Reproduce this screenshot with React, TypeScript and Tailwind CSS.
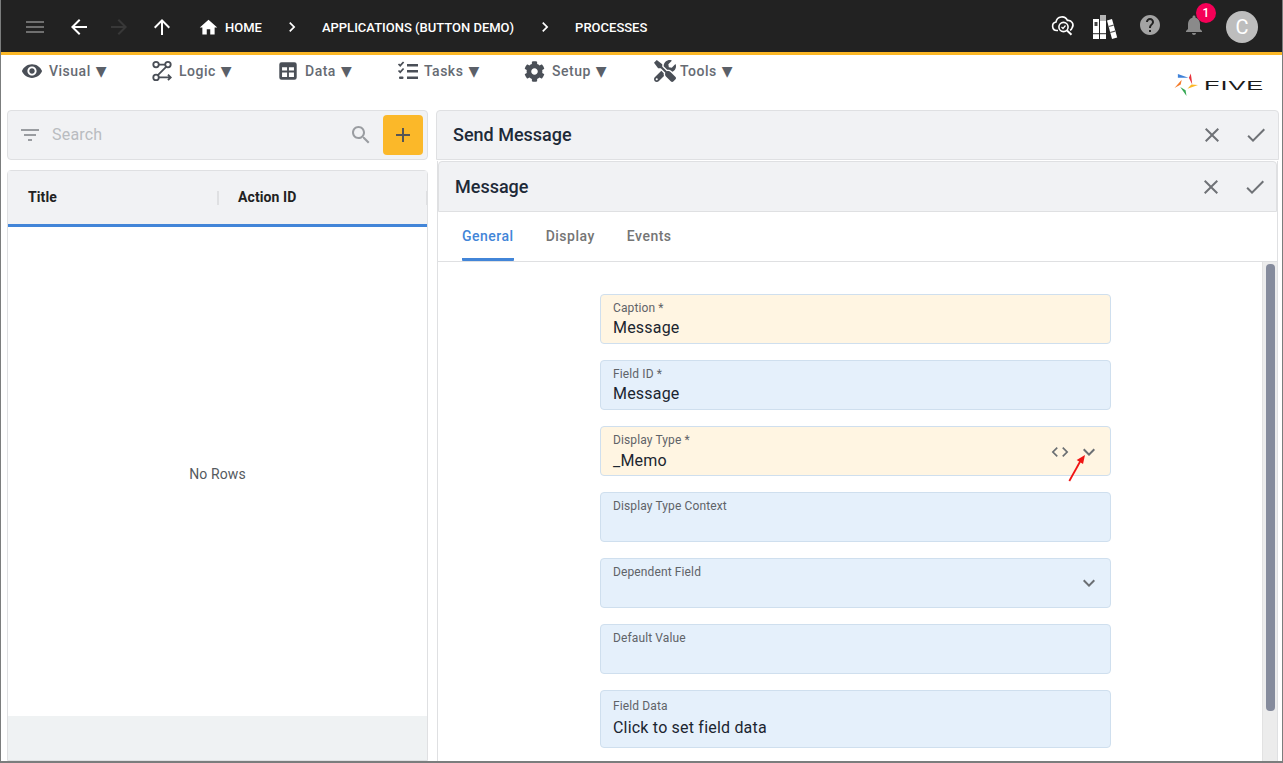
import React from "react";
import { FaCog, FaTools } from "react-icons/fa";

const P = {
  menu: "M3 18h18v-2H3v2zm0-5h18v-2H3v2zm0-7v2h18V6H3z",
  back: "M20 11H7.83l5.59-5.59L12 4l-8 8 8 8 1.41-1.41L7.83 13H20v-2z",
  forward: "M12 4l-1.41 1.41L16.17 11H4v2h12.17l-5.58 5.59L12 20l8-8z",
  up: "M4 12l1.41 1.41L11 7.83V20h2V7.83l5.58 5.59L20 12l-8-8-8 8z",
  home: "M10 20v-6h4v6h5v-8h3L12 3 2 12h3v8z",
  chevron: "M10 6L8.59 7.41 13.17 12l-4.58 4.59L10 18l6-6z",
  eye: "M12 4.5C7 4.5 2.73 7.61 1 12c1.73 4.39 6 7.5 11 7.5s9.27-3.11 11-7.5c-1.73-4.39-6-7.5-11-7.5zM12 17c-2.76 0-5-2.24-5-5s2.24-5 5-5 5 2.24 5 5-2.24 5-5 5zm0-8c-1.66 0-3 1.34-3 3s1.34 3 3 3 3-1.34 3-3-1.34-3-3-3z",
  table: "M5 2.5h14A2.5 2.5 0 0 1 21.5 5v14a2.5 2.5 0 0 1-2.5 2.5H5A2.5 2.5 0 0 1 2.5 19V5A2.5 2.5 0 0 1 5 2.5zM5.5 8v3.5H11V8H5.5zm7.5 0v3.5h5.500V8H13zm-7.500 5.500V18.500H11V13.500H5.500zm7.500 0V18.500h5.500V13.500H13z",
  help: "M12 2C6.48 2 2 6.48 2 12s4.48 10 10 10 10-4.48 10-10S17.52 2 12 2zm1 17h-2v-2h2v2zm2.07-7.75l-.9.92C13.45 12.9 13 13.5 13 15h-2v-.5c0-1.1.45-2.1 1.17-2.83l1.24-1.26c.37-.36.59-.86.59-1.41 0-1.1-.9-2-2-2s-2 .9-2 2H8c0-2.21 1.79-4 4-4s4 1.79 4 4c0 .88-.36 1.68-.93 2.25z",
  bell: "M12 22c1.1 0 2-.9 2-2h-4c0 1.1.89 2 2 2zm6-6v-5c0-3.07-1.64-5.64-4.5-6.32V4c0-.83-.67-1.5-1.5-1.5s-1.5.67-1.5 1.5v.68C7.63 5.36 6 7.92 6 11v5l-2 2v1h16v-1l-2-2z",
  close: "M19 6.41L17.59 5 12 10.59 6.41 5 5 6.41 10.59 12 5 17.59 6.41 19 12 13.41 17.59 19 19 17.59 13.41 12z",
  check: "M9 16.17L4.83 12l-1.41 1.41L9 19 21 7l-1.41-1.41z",
  filter: "M10 18h4v-2h-4v2zM3 6v2h18V6H3zm3 7h12v-2H6v2z",
  search: "M15.5 14h-.79l-.28-.27C15.41 12.59 16 11.11 16 9.5 16 5.91 13.09 3 9.5 3S3 5.91 3 9.5 5.91 16 9.5 16c1.61 0 3.09-.59 4.23-1.57l.27.28v.79l5 4.99L20.49 19l-4.99-5zm-6 0C7.01 14 5 11.99 5 9.5S7.01 5 9.5 5 14 7.01 14 9.5 11.99 14 9.5 14z",
  add: "M19 13h-6v6h-2v-6H5v-2h6V5h2v6h6v2z",
  expand: "M16.59 8.59L12 13.17 7.41 8.59 6 10l6 6 6-6z",
  code: "M9.4 16.6L4.8 12l4.6-4.6L8 6l-6 6 6 6 1.4-1.4zm5.2 0l4.6-4.6-4.6-4.6L16 6l6 6-6 6-1.4-1.4z",
};

function I({ d, size = 24, className = "" }: { d: string; size?: number; className?: string }) {
  return (
    <svg viewBox="0 0 24 24" width={size} height={size} className={`shrink-0 ${className}`} fill="currentColor" fillRule="evenodd">
      <path d={d} />
    </svg>
  );
}

function LogicIcon() {
  return (
    <svg viewBox="0 0 24 24" width={22} height={22} className="shrink-0" fill="none" stroke="currentColor" strokeWidth="2">
      <circle cx="5.5" cy="5" r="3" />
      <circle cx="18.5" cy="5" r="3" />
      <circle cx="5.5" cy="19" r="3" />
      <path d="M8.5 5h7M16.5 7.5L7.5 16.5M8.5 19h13M18.5 16l3 3-3 3" />
    </svg>
  );
}

function TasksIcon() {
  return (
    <svg viewBox="0 0 24 24" width={24} height={24} className="shrink-0" fill="currentColor">
      <path d="M11 5h11v2.4H11zM11 11h11v2.4H11zM11 17.5h11v2.4H11z" />
      <path d="M2.5 5l1.7 1.7L7.6 3" fill="none" stroke="currentColor" strokeWidth="1.7" />
      <path d="M2.5 11.5l1.7 1.7 3.4-3.7" fill="none" stroke="currentColor" strokeWidth="1.7" />
      <rect x="3" y="17.5" width="4.5" height="2.4" rx="1" />
    </svg>
  );
}

function MenuItem({ icon, label, w, gap = "gap-[6px]" }: { icon: React.ReactNode; label: string; w: string; gap?: string }) {
  return (
    <div className={`flex items-center h-[24px] ${gap} ${w} text-[#4a4f57]`}>
      {icon}
      <span className="text-[14px] font-medium tracking-[0.5px] text-[#666b73]">
        {label} <span className="ml-[1px] font-['DejaVu_Sans',sans-serif] text-[14px] text-[#5b6068]">▼</span>
      </span>
    </div>
  );
}

function CloudIcon() {
  return (
    <svg viewBox="0 0 24 24" width={24} height={24} className="shrink-0 mb-[4px]" fill="none" stroke="white" strokeWidth="1.6">
      <path d="M7 17.5H5.8A4.3 4.3 0 0 1 5 9a6 6 0 0 1 11.4-1.6A4.8 4.8 0 0 1 21 15a3 3 0 0 1-2 2.2" />
      <circle cx="12.5" cy="14" r="4.6" />
      <path d="M16 17.5l4.5 4.3" strokeWidth="2" />
      <path d="M10.5 14l1.5 1.5 2.5-3" strokeWidth="1.2" />
    </svg>
  );
}

function BooksIcon() {
  return (
    <svg viewBox="0 0 26 26" width={26} height={26} className="shrink-0" fill="white">
      <path d="M1 5h6v20H1z" />
      <path d="M2.5 8h3v4h-3z" fill="#444" />
      <path d="M8 1h6v24H8z" />
      <path d="M8 1h6v6H8z" fill="#b5b5b5" />
      <path d="M15 6.5l5-1.5 5.2 18.5-5.2 1.5z" />
      <path d="M1 19h6v1.2H1zM8 19h6v1.2H8zM18 18l5-1.4.3 1.1-5 1.4zM16.5 12l5-1.4.3 1.1-5 1.4z" fill="#555" />
    </svg>
  );
}

function FiveLogo() {
  return (
    <div className="flex items-center gap-[5px]">
      <svg viewBox="0 0 26 26" width={25} height={25} className="shrink-0">
        <polygon points="4,1 15,5 4,5" fill="#3f82d9" />
        <polygon points="17.5,0.5 19,12 15.5,5" fill="#e8323c" />
        <polygon points="25,12.5 14,16.5 18,12" fill="#fbb726" />
        <polygon points="13,24 6.5,14.5 12,18" fill="#37a854" />
        <polygon points="0.5,15.5 8,7 7,12" fill="#f47b2a" />
      </svg>
      <span className="w-[58px] inline-block origin-left scale-x-[1.95] font-['Liberation_Sans',sans-serif] text-[13px] leading-[14px] tracking-[0.5px] text-[#1b1b1b]">FIVE</span>
    </div>
  );
}

function Card({ title, offset }: { title: string; offset?: boolean }) {
  return (
    <div className={`shrink-0 flex items-center bg-[#f1f2f4] border border-[#dfe0e2] rounded-t-[4px] ${offset ? "h-[51px] pt-[1px] pl-[16px] pr-[9px]" : "h-[50px] pl-[16px] pr-[10px]"}`}>
      <span className={`flex-1 text-[18px] leading-[24px] font-medium text-[#1e2a38] ${offset ? "" : "pb-[1px]"}`}>{title}</span>
      <I d={P.close} size={24} className="text-[#6f7276]" />
      <span className="w-[20px]" />
      <I d={P.check} size={24} className="text-[#6f7276]" />
    </div>
  );
}

function Field({ label, value, tone, h = "h-[50px]", pt = "pt-[6px]", valueMt = "mt-[1px]", right }: { label: string; value?: string; tone: "amber" | "blue"; h?: string; pt?: string; valueMt?: string; right?: React.ReactNode }) {
  return (
    <div className={`relative ${h} ${pt} w-[511px] shrink-0 rounded-[4px] border border-[#cfdfee] pl-[12px] ${tone === "amber" ? "bg-[#fff5e2]" : "bg-[#e5f0fb]"}`}>
      <div className="text-[12px] leading-[15px] tracking-[0.12px] text-[#5f6368]">{label}</div>
      {value && <div className={`text-[16px] leading-[22px] tracking-[0.2px] ${valueMt} text-[#1b2530]`}>{value}</div>}
      {right}
    </div>
  );
}

export default function App() {
  return (
    <div className="w-[1283px] h-[763px] overflow-hidden flex flex-col bg-white border-l border-r border-b-2 border-[#7b7d7d] font-['Roboto',sans-serif]">
      <header className="h-[55px] shrink-0 flex items-center pt-[2px] bg-[#222222] border-b-[3px] border-[#fbb726] text-white">
        <I d={P.menu} size={24} className="ml-[22px] text-[#6f6f6f]" />
        <I d={P.back} size={24} className="ml-[20px]" />
        <I d={P.forward} size={24} className="ml-[16px] text-[#383838]" />
        <I d={P.up} size={24} className="ml-[19px]" />
        <I d={P.home} size={21} className="ml-[24px]" />
        <span className="ml-[6px] mt-[1px] text-[13px] font-medium">HOME</span>
        <I d={P.chevron} size={20} className="ml-[20px]" />
        <span className="ml-[20px] mt-[1px] text-[13px] font-medium">APPLICATIONS (BUTTON DEMO)</span>
        <I d={P.chevron} size={20} className="ml-[21px]" />
        <span className="ml-[20px] mt-[1px] text-[13px] font-medium">PROCESSES</span>
        <div className="flex-1" />
        <CloudIcon />
        <span className="w-[17px]" />
        <BooksIcon />
        <span className="w-[20px]" />
        <I d={P.help} size={24} className="mb-[4px] text-[#a3a3a3]" />
        <span className="w-[20px]" />
        <div className="relative mb-[4px]">
          <I d={P.bell} size={24} className="text-[#8a8a8a]" />
          <span className="absolute -top-[10px] left-[14px] w-[20px] h-[20px] rounded-full bg-[#f50057] text-white text-[12px] font-medium flex items-center justify-center">1</span>
        </div>
        <span className="w-[20px]" />
        <div className="w-[32px] h-[32px] mr-[24px] rounded-full bg-[#bdbdbd] text-white text-[20px] flex items-center justify-center">C</div>
      </header>

      <nav className="h-[55px] shrink-0 flex items-start pt-[4px] pl-[20px] relative">
        <MenuItem w="w-[130px]" icon={<I d={P.eye} size={22} />} label="Visual" />
        <MenuItem w="w-[126px]" icon={<LogicIcon />} label="Logic" />
        <MenuItem w="w-[119px]" icon={<I d={P.table} size={22} />} label="Data" />
        <MenuItem w="w-[128px]" gap="gap-[4px]" icon={<TasksIcon />} label="Tasks" />
        <MenuItem w="w-[128px]" gap="gap-[7px]" icon={<FaCog size={21} className="shrink-0" />} label="Setup" />
        <MenuItem w="w-[120px]" gap="gap-[4px]" icon={<FaTools size={22} className="shrink-0 ml-[2px]" />} label="Tools" />
        <div className="absolute left-[1173px] top-[18px]"><FiveLogo /></div>
      </nav>

      <main className="flex-1 min-h-0 flex pl-[6px] pr-[3px] gap-[8px]">
        <aside className="w-[421px] shrink-0 flex flex-col gap-[10px]">
          <div className="h-[50px] shrink-0 flex items-center bg-[#f1f2f4] border border-[#dfe0e2] rounded-[4px] pl-[10px] pr-[4px]">
            <I d={P.filter} size={24} className="text-[#9a9da1]" />
            <span className="ml-[10px] flex-1 text-[16px] tracking-[0.2px] text-[#b9bcc0]">Search</span>
            <I d={P.search} size={24} className="text-[#9a9da1]" />
            <div className="ml-[10px] w-[40px] h-[40px] rounded-[4px] bg-[#fbb829] flex items-center justify-center text-[#555555]">
              <I d={P.add} size={24} />
            </div>
          </div>
          <div className="flex-1 min-h-0 flex flex-col border border-[#dfe0e2] rounded-t-[4px]">
            <div className="h-[56px] shrink-0 flex items-center bg-[#f1f2f4] border-b-[3px] border-[#4285d8] text-[14px] font-bold tracking-[0.1px] text-[#222222]">
              <span className="w-[209px] pl-[20px]">Title</span>
              <span className="w-[2px] h-[14px] bg-[#dfe0e2]" />
              <span className="flex-1 pl-[19px]">Action ID</span>
              <span className="w-[1px] h-[14px] bg-[#dfe0e2]" />
            </div>
            <div className="h-[489px] shrink-0 flex items-center justify-center pt-[6px] text-[14px] tracking-[0.1px] text-[#555a60]">No Rows</div>
            <div className="flex-1 bg-[#eff2f3]" />
          </div>
        </aside>

        <section className="flex-1 min-w-0 flex flex-col">
          <Card title="Send Message" />
          <div className="flex-1 min-h-0 flex flex-col ml-[1px] mr-[1px] border-l border-r border-[#dfe0e2] mt-[1px]">
            <Card title="Message" offset />
            <div className="h-[50px] shrink-0 flex border-b border-[#dfe0e2] pl-[24px] gap-[32px] text-[14px] font-medium tracking-[0.5px]">
              <span className="h-full flex items-center pt-[2px] border-b-[3px] rounded-b-[1px] border-[#4285d8] text-[#4285d8]">General</span>
              <span className="h-full flex items-center text-[#757575]">Display</span>
              <span className="h-full flex items-center text-[#757575]">Events</span>
            </div>
            <div className="flex-1 min-h-0 flex">
              <div className="flex-1 min-w-0 flex flex-col gap-[16px] pt-[32px] pl-[162px]">
                <Field tone="amber" label="Caption *" value="Message" />
                <Field tone="blue" label="Field ID *" value="Message" />
                <Field
                  tone="amber"
                  label="Display Type *"
                  value="_Memo"
                  valueMt="mt-[2px]"
                  right={
                    <>
                      <I d={P.code} size={20} className="absolute right-[40px] top-[15px] text-[#6b6f73]" />
                      <I d={P.expand} size={24} className="absolute right-[9px] top-[13px] text-[#6b6f73]" />
                      <svg viewBox="0 0 24 34" width={24} height={34} className="absolute right-[20px] top-[23px]">
                        <path d="M3.3 31L15 10" stroke="#f01414" strokeWidth="1.8" fill="none" />
                        <path d="M19 5L10.7 10L17 14z" fill="#f01414" />
                      </svg>
                    </>
                  }
                />
                <Field tone="blue" label="Display Type Context" />
                <Field tone="blue" label="Dependent Field" right={<I d={P.expand} size={24} className="absolute right-[9px] top-[12px] text-[#6b6f73]" />} />
                <Field tone="blue" label="Default Value" />
                <Field tone="blue" label="Field Data" value="Click to set field data" h="h-[58px]" pt="pt-[8px]" valueMt="mt-[3px]" />
              </div>
              <div className="w-[15px] shrink-0 bg-[#ececec] border-l border-[#e2e2e2] flex justify-center">
                <div className="w-[9px] h-[447px] mt-[2px] rounded-[4px] bg-[#858b9c]" />
              </div>
            </div>
          </div>
        </section>
      </main>
    </div>
  );
}
